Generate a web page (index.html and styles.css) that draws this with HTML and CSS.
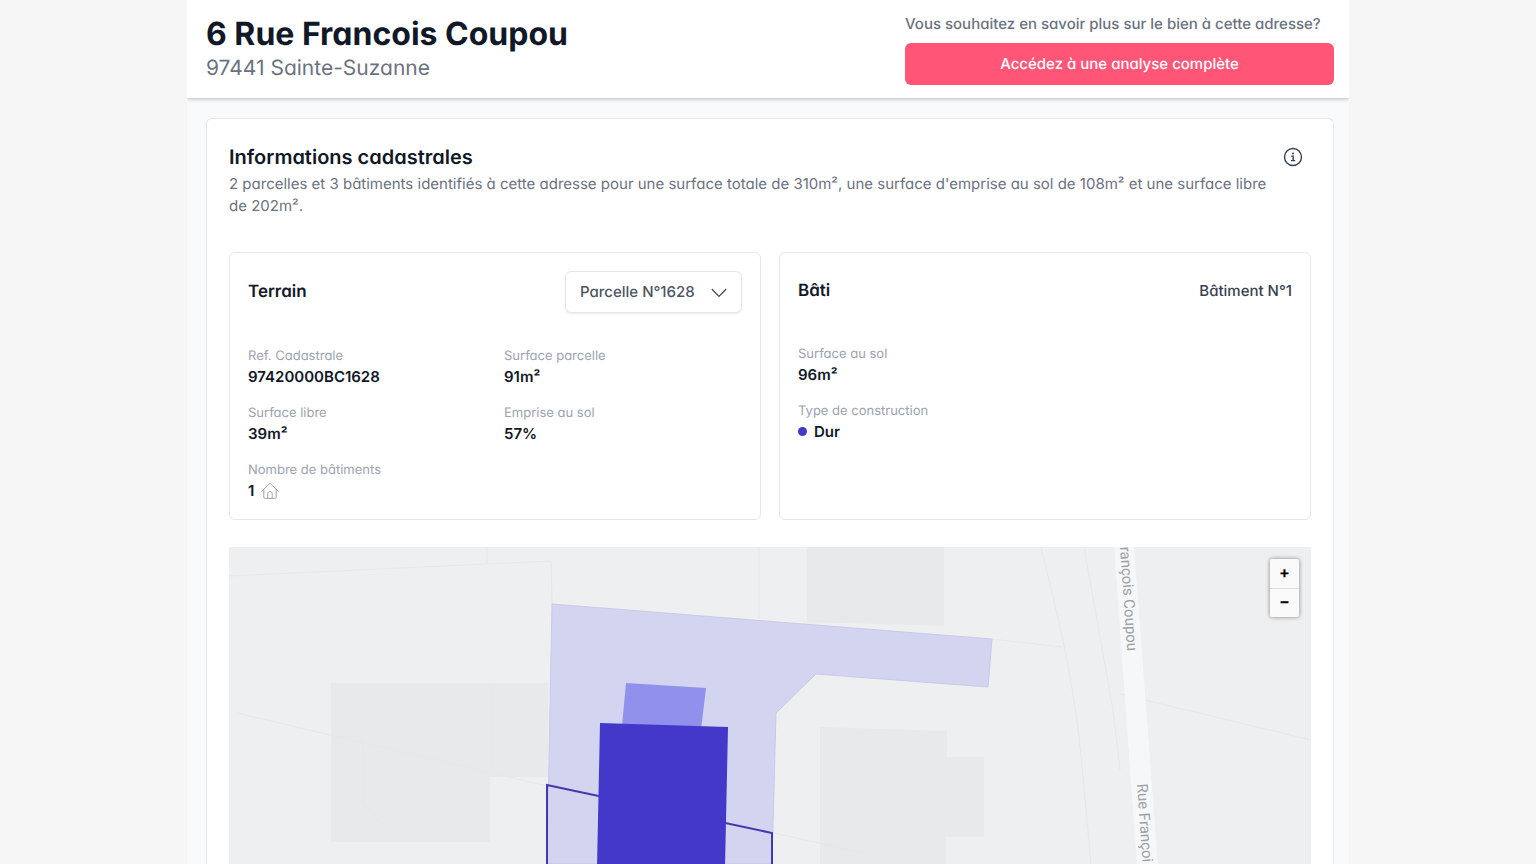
FILE: index.html
```html
<!DOCTYPE html>
<html lang="fr">
<head>
    <meta charset="UTF-8">
    <meta name="viewport" content="width=device-width, initial-scale=1.0">
    <title>6 Rue Francois Coupou - Sainte-Suzanne</title>
    <link rel="stylesheet" href="styles.css">
</head>
<body>
    <div class="page">
        <header class="header">
            <div class="address">
                <h1>6 Rue Francois Coupou</h1>
                <p>97441 Sainte-Suzanne</p>
            </div>
            <div class="cta">
                <p>Vous souhaitez en savoir plus sur le bien à cette adresse?</p>
                <button type="button" class="cta-button">Accédez à une analyse complète</button>
            </div>
        </header>

        <main class="content">
            <section class="card">
                <div class="card-header">
                    <h2>Informations cadastrales</h2>
                    <button type="button" class="info-button" aria-label="Informations">
                        <svg viewBox="0 0 20 20" width="20" height="20" fill="none" stroke="currentColor">
                            <circle cx="10" cy="10" r="8.5" stroke-width="1.4"/>
                            <path d="M8.4 9.2h1.8v4.4M8 13.6h4.2" stroke-width="1.4"/>
                            <circle cx="10" cy="6.5" r="1" fill="currentColor" stroke="none"/>
                        </svg>
                    </button>
                </div>
                <p class="summary">2 parcelles et 3 bâtiments identifiés à cette adresse pour une surface totale de 310m², une surface d'emprise au sol de 108m² et une surface libre de 202m².</p>

                <div class="panels">
                    <section class="panel">
                        <div class="panel-header">
                            <h3>Terrain</h3>
                            <div class="select-wrap">
                                <select class="select" aria-label="Parcelle">
                                    <option>Parcelle N°1628</option>
                                </select>
                                <svg class="chevron" viewBox="0 0 16 16" width="16" height="16" fill="none" stroke="currentColor" stroke-width="1.2" stroke-linecap="round" stroke-linejoin="round">
                                    <path d="M1.2 4.5 8 11.3l6.8-6.8"/>
                                </svg>
                            </div>
                        </div>
                        <dl class="facts">
                            <div>
                                <dt>Ref. Cadastrale</dt>
                                <dd>97420000BC1628</dd>
                            </div>
                            <div>
                                <dt>Surface parcelle</dt>
                                <dd>91m²</dd>
                            </div>
                            <div>
                                <dt>Surface libre</dt>
                                <dd>39m²</dd>
                            </div>
                            <div>
                                <dt>Emprise au sol</dt>
                                <dd>57%</dd>
                            </div>
                            <div>
                                <dt>Nombre de bâtiments</dt>
                                <dd>1
                                    <svg class="house" viewBox="0 0 18 18" width="18" height="18" fill="none" stroke="currentColor" stroke-linecap="round" stroke-linejoin="round">
                                        <path d="M.8 9.2 9 1.3l8.2 7.9M2.8 7.4v7.7c0 .8.5 1.3 1.3 1.3h9.8c.8 0 1.3-.5 1.3-1.3V7.4"/>
                                        <path d="M6.8 16.2v-4.4c0-1.5.9-2.2 2.2-2.2s2.2.7 2.2 2.2v4.4"/>
                                    </svg>
                                </dd>
                            </div>
                        </dl>
                    </section>

                    <section class="panel">
                        <div class="panel-header panel-header-plain">
                            <h3>Bâti</h3>
                            <span class="building">Bâtiment N°1</span>
                        </div>
                        <dl class="facts">
                            <div class="wide">
                                <dt>Surface au sol</dt>
                                <dd>96m²</dd>
                            </div>
                            <div class="wide">
                                <dt>Type de construction</dt>
                                <dd><span class="dot"></span>Dur</dd>
                            </div>
                        </dl>
                    </section>
                </div>

                <div class="map">
                    <svg class="map-canvas" viewBox="0 0 1082 317" preserveAspectRatio="xMidYMin slice">
                        <!-- surrounding buildings -->
                        <g class="map-building">
                            <path d="M102 136h217v94h-58v65H102z"/>
                            <path d="M578 0h137v79l-137-4z"/>
                            <path d="M591 180l127 4v26h37v80h-38v27H591z"/>
                        </g>
                        <!-- parcel limits -->
                        <g class="map-limit">
                            <path d="M0 29l322-15 1 43M258 0v16M530 0v72"/>
                            <path d="M8 166l314 74M545 286l90 20M108 190h26v66l30 34M262 137v90"/>
                            <path d="M763 92l70 8M812 0c14 60 34 130 42 230l8 87M855 0l29 163 7 60"/>
                            <path d="M891 147l191 46"/>
                        </g>
                        <!-- street -->
                        <path class="map-road" d="M885-2h20l24 322h-21z"/>
                        <g class="map-street">
                            <text transform="translate(891 0) rotate(86)">rançois Coupou</text>
                            <text transform="translate(908 237) rotate(86)">Rue Françoi</text>
                        </g>
                        <!-- selected parcels -->
                        <path class="map-parcel" d="M323 57l440 35-4 48-172-13-40 39-4 151H318z"/>
                        <path class="map-annex" d="M397 136l80 5-5 42-79-4z"/>
                        <path class="map-outline" d="M318 330v-92l225 48v44"/>
                        <path class="map-house" d="M371 176l128 4-3 140H368z"/>
                    </svg>
                    <div class="zoom">
                        <button type="button" aria-label="Zoom avant">+</button>
                        <button type="button" aria-label="Zoom arrière">−</button>
                    </div>
                </div>
            </section>
        </main>
    </div>
</body>
</html>
```

FILE: styles.css
```css
* {
    box-sizing: border-box;
}
body {
    margin: 0;
    font-family: Inter, "Liberation Sans", sans-serif;
    font-size: 15px;
    line-height: 22px;
    font-feature-settings: "cv11";
    text-rendering: geometricPrecision;
    color: #111827;
    background-color: #f6f6f6;
}
h1, h2, h3, p, dl, dd {
    margin: 0;
}
button, select {
    font: inherit;
    font-feature-settings: inherit;
    text-rendering: inherit;
    cursor: pointer;
}
.page {
    display: flex;
    flex-direction: column;
    max-width: 1162px;
    height: 100vh;
    margin: 0 auto;
    background-color: #f9fafb;
    overflow: hidden;
}
.header {
    position: relative;
    z-index: 1;
    display: flex;
    justify-content: space-between;
    padding: 13px 15px 13px 19px;
    background-color: white;
    box-shadow: 0 1px 4px rgba(0, 0, 0, 0.25);
}
h1 {
    font-size: 32px;
    line-height: 42px;
    font-weight: 700;
}
.address p {
    font-size: 21px;
    line-height: 28px;
    color: #6b7280;
}
.cta {
    display: flex;
    flex-direction: column;
    gap: 8px;
    width: 429px;
    font-weight: 500;
}
.cta p {
    color: #6b7280;
}
.cta-button {
    height: 42px;
    border: none;
    border-radius: 6px;
    font-weight: 500;
    color: white;
    background-color: #ff5577;
}
.content {
    flex: 1;
    display: flex;
    padding: 20px 15px 0 19px;
    min-height: 0;
}
.card {
    flex: 1;
    display: flex;
    flex-direction: column;
    padding: 25px 22px 0;
    border: 1px solid #e5e7eb;
    border-bottom: none;
    border-radius: 6px 6px 0 0;
    background-color: white;
}
.card-header {
    display: flex;
    justify-content: space-between;
    align-items: center;
    margin-bottom: 3px;
    padding-right: 8px;
}
h2 {
    font-size: 20px;
    line-height: 26px;
    font-weight: 600;
}
.info-button {
    display: flex;
    padding: 0;
    border: none;
    color: #374151;
    background: none;
}
.summary {
    padding-right: 30px;
    color: #6b7280;
}
.panels {
    display: grid;
    grid-template-columns: 1fr 1fr;
    gap: 18px;
    margin: 35px 0 27px;
}
.panel {
    height: 268px;
    padding: 18px;
    border: 1px solid #e5e7eb;
    border-radius: 6px;
}
.panel-header {
    display: flex;
    justify-content: space-between;
    align-items: center;
    height: 42px;
    margin-bottom: 33px;
}
.panel-header-plain {
    height: 40px;
}
h3 {
    font-size: 17px;
    font-weight: 600;
}
.select-wrap {
    position: relative;
}
.select {
    appearance: none;
    display: block;
    width: 177px;
    height: 42px;
    padding: 0 14px;
    border: 1px solid #e5e7eb;
    border-radius: 6px;
    font-weight: 500;
    color: #4b5563;
    background-color: white;
    box-shadow: 0 1px 2px rgba(0, 0, 0, 0.08);
}
.chevron {
    position: absolute;
    top: 14px;
    right: 15px;
    color: #374151;
    pointer-events: none;
}
.building {
    font-weight: 500;
    color: #374151;
}
.facts {
    display: grid;
    grid-template-columns: 238px 1fr;
    column-gap: 18px;
    row-gap: 16px;
}
.wide {
    grid-column: 1 / -1;
}
dt {
    font-size: 13px;
    line-height: 20px;
    color: #9ca3af;
}
dd {
    display: flex;
    align-items: center;
    gap: 7px;
    line-height: 21px;
    font-weight: 600;
}
.house {
    color: #9ca3af;
}
.dot {
    width: 9px;
    height: 9px;
    border-radius: 50%;
    background-color: #4338ca;
}
.map {
    position: relative;
    flex: 1;
    min-height: 0;
    background-color: #eeeff0;
    overflow: hidden;
}
.map-canvas {
    display: block;
    width: 100%;
    height: 100%;
}
.map-building {
    fill: #e8e9eb;
}
.map-limit {
    fill: none;
    stroke: #e6e7e9;
}
.map-road {
    fill: #f6f7f9;
}
.map-street {
    font-size: 15px;
    font-family: Roboto, sans-serif;
    fill: #a0a1a3;
}
.map-parcel {
    fill: #d3d4ef;
    stroke: #c9caea;
}
.map-annex {
    fill: #8f91ed;
}
.map-outline {
    fill: none;
    stroke: #4338ac;
    stroke-width: 2;
}
.map-house {
    fill: #4338ca;
}
.zoom {
    position: absolute;
    top: 12px;
    right: 12px;
    display: flex;
    flex-direction: column;
    width: 29px;
    border-radius: 2px;
    background-color: #fafafa;
    box-shadow: 0 0 4px rgba(0, 0, 0, 0.45);
}
.zoom button {
    height: 29px;
    padding: 0 0 4px;
    border: none;
    font-size: 16px;
    font-weight: 700;
    color: black;
    background: none;
}
.zoom button + button {
    border-top: 1px solid #ddd;
}
```
